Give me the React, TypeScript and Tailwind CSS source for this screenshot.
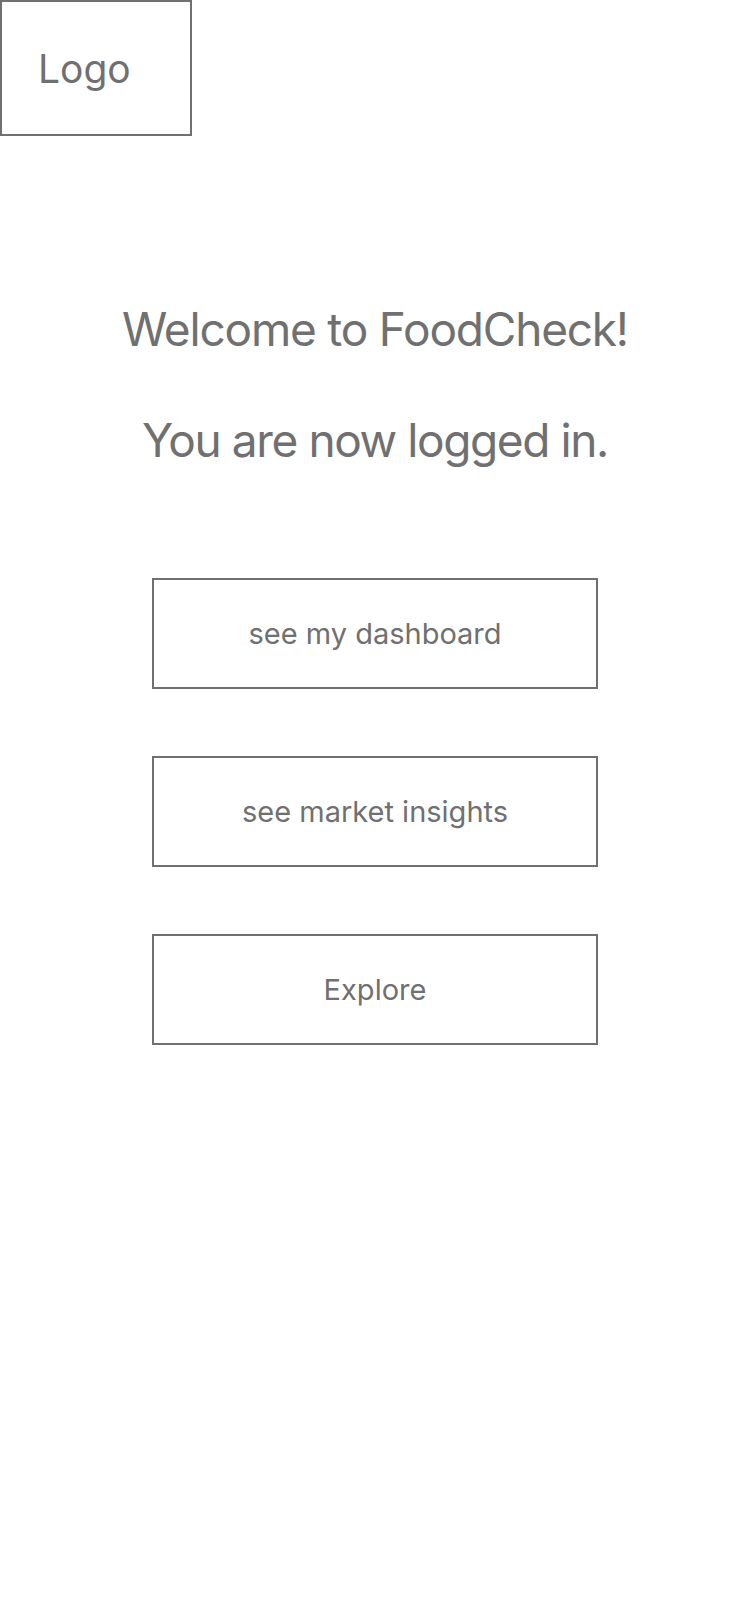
import React from 'react'

const buttons = ['see my dashboard', 'see market insights', 'Explore']

export default function App() {
	return (
		<div className="w-[750px] min-h-[1624px] bg-white text-[#707070]" style={{ fontFamily: 'Inter, "Noto Sans", sans-serif' }}>
			{/* Logo */}
			<div className="w-[192px] h-[136px] border-2 border-[#707070] flex items-center pl-[36px]">
				<span className="text-[39px] leading-none">Logo</span>
			</div>

			{/* Welcome */}
			<div className="mt-[165px] flex flex-col items-center">
				<h1 className="text-[46px] leading-[56px] tracking-[-1.2px]">Welcome to FoodCheck!</h1>
				<p className="mt-[55px] text-[46px] leading-[56px] tracking-[-1.4px]">You are now logged in.</p>
			</div>

			{/* Actions */}
			<div className="mt-[110px] flex flex-col items-center gap-[67px]">
				{buttons.map(label => (
					<button
						key={label}
						className="w-[446px] h-[111px] border-2 border-[#707070] text-[29px] text-[#707070] flex items-center justify-center"
					>
						{label}
					</button>
				))}
			</div>
		</div>
	)
}
